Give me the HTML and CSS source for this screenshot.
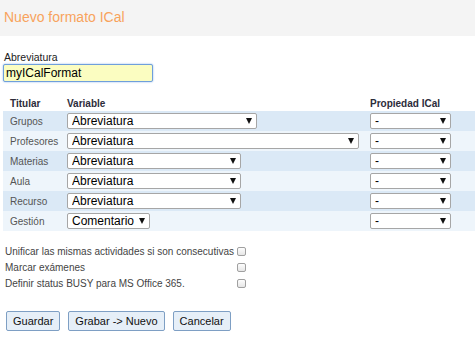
FILE: index.html
```html
<!DOCTYPE html>
<html>
<head>
    <title>Nuevo formato ICal</title>
    <meta name="viewport" content="width=device-width, initial-scale=1.0">
    <link rel="stylesheet" href="styles.css">
</head>
<body>
    <div class="header">
        <h1>Nuevo formato ICal</h1>
    </div>

    <div class="container">
        <div class="field">
            <label for="abrevInput">Abreviatura</label>
            <input type="text" id="abrevInput" class="abrev-input" value="myICalFormat" autofocus>
        </div>

        <table class="mapping">
            <thead>
                <tr>
                    <th class="col-title">Titular</th>
                    <th class="col-var">Variable</th>
                    <th class="col-prop">Propiedad ICal</th>
                </tr>
            </thead>
            <tbody>
                <tr>
                    <td class="col-title">Grupos</td>
                    <td><span class="select-wrap w-190"><select><option>Abreviatura</option></select></span></td>
                    <td><span class="select-wrap w-81"><select><option>-</option></select></span></td>
                </tr>
                <tr>
                    <td class="col-title">Profesores</td>
                    <td><span class="select-wrap w-292"><select><option>Abreviatura</option></select></span></td>
                    <td><span class="select-wrap w-81"><select><option>-</option></select></span></td>
                </tr>
                <tr>
                    <td class="col-title">Materias</td>
                    <td><span class="select-wrap w-174"><select><option>Abreviatura</option></select></span></td>
                    <td><span class="select-wrap w-81"><select><option>-</option></select></span></td>
                </tr>
                <tr>
                    <td class="col-title">Aula</td>
                    <td><span class="select-wrap w-174"><select><option>Abreviatura</option></select></span></td>
                    <td><span class="select-wrap w-81"><select><option>-</option></select></span></td>
                </tr>
                <tr>
                    <td class="col-title">Recurso</td>
                    <td><span class="select-wrap w-174"><select><option>Abreviatura</option></select></span></td>
                    <td><span class="select-wrap w-81"><select><option>-</option></select></span></td>
                </tr>
                <tr>
                    <td class="col-title">Gestión</td>
                    <td><span class="select-wrap w-82"><select><option>Comentario</option></select></span></td>
                    <td><span class="select-wrap w-81"><select><option>-</option></select></span></td>
                </tr>
            </tbody>
        </table>

        <table class="options">
            <tr>
                <td>Unificar las mismas actividades si son consecutivas</td>
                <td><input type="checkbox" class="check"></td>
            </tr>
            <tr>
                <td>Marcar exámenes</td>
                <td><input type="checkbox" class="check"></td>
            </tr>
            <tr>
                <td>Definir status BUSY para MS Office 365.</td>
                <td><input type="checkbox" class="check"></td>
            </tr>
        </table>

        <div class="actions">
            <button>Guardar</button>
            <button>Grabar -&gt; Nuevo</button>
            <button>Cancelar</button>
        </div>
    </div>
</body>
</html>
```

FILE: styles.css
```css
/* base */
body {
    font-family: "Liberation Sans", Arial, sans-serif;
    margin: 0;
    padding: 0;
    background-color: #fff;
    color: #222;
}

.header {
    background-color: #f4f4f4;
    height: 36px;
    padding: 0 4px;
    display: flex;
    align-items: center;
}

.header h1 {
    margin: 0;
    font-size: 14px;
    font-weight: normal;
    color: #f8a35c;
    position: relative;
    top: -1px;
}

.container {
    padding: 15px 0 0 3px;
}

/* abreviatura */
.field label {
    display: block;
    font-size: 10.5px;
    color: #222;
    padding-left: 1px;
    line-height: 12px;
}

.abrev-input {
    width: 150px;
    height: 18px;
    box-sizing: border-box;
    margin: 0;
    padding: 0 2px;
    font-family: inherit;
    font-size: 12px;
    color: #000;
    background: #fbfdc1;
    border: 1px solid #6f9fdb;
    border-radius: 2px;
    box-shadow: 0 0 2px #8ab4ea;
    outline: none;
}

/* tabla de variables */
.mapping {
    width: 472px;
    border-collapse: collapse;
    margin-top: 13px;
    font-size: 10px;
}

.mapping th {
    text-align: left;
    font-weight: bold;
    color: #2c2c3a;
    height: 16px;
    padding: 0;
    vertical-align: middle;
}

.mapping td {
    height: 20px;
    padding: 0;
    vertical-align: middle;
    color: #555;
}

.mapping .col-title {
    width: 57px;
    padding-left: 7px;
}

.mapping .col-var {
    width: 303px;
}

.mapping tbody tr:nth-child(odd) {
    background-color: #dbe9f6;
}

.mapping tbody tr:nth-child(even) {
    background-color: #eef5fb;
}

.select-wrap {
    display: inline-block;
    position: relative;
    vertical-align: middle;
}

.select-wrap select {
    -webkit-appearance: none;
    appearance: none;
    width: 100%;
    height: 16px;
    box-sizing: border-box;
    margin: 0;
    padding: 0 0 0 4px;
    font-family: inherit;
    font-size: 12px;
    line-height: 14px;
    color: #000;
    background: #fff;
    border: 1px solid #a6a6a6;
    border-radius: 2px;
    display: block;
}

.select-wrap::after {
    content: "";
    position: absolute;
    right: 5px;
    top: 5px;
    border-left: 3px solid transparent;
    border-right: 3px solid transparent;
    border-top: 6px solid #111;
    pointer-events: none;
}

.w-190 { width: 190px; }
.w-292 { width: 292px; }
.w-174 { width: 174px; }
.w-82 { width: 83px; }
.w-81 { width: 81px; }

/* opciones */
.options {
    border-collapse: collapse;
    margin-top: 12px;
    margin-left: 2px;
    font-size: 10px;
    color: #444;
}

.options td {
    height: 16px;
    padding: 0;
    vertical-align: middle;
}

.check {
    -webkit-appearance: none;
    appearance: none;
    width: 9px;
    height: 9px;
    margin: 0 0 0 3px;
    display: block;
    border: 1px solid #a0a0a0;
    border-radius: 2px;
    background: linear-gradient(#fdfdfd, #e6e6e6);
}

/* botones */
.actions {
    display: flex;
    gap: 8px;
    margin-top: 20px;
    padding-left: 3px;
}

.actions button {
    height: 20px;
    padding: 0 6px;
    font-family: inherit;
    font-size: 11px;
    color: #111;
    background: #e6eff8;
    border: 1px solid #7e9fc4;
    border-radius: 2px;
    cursor: pointer;
}
```
